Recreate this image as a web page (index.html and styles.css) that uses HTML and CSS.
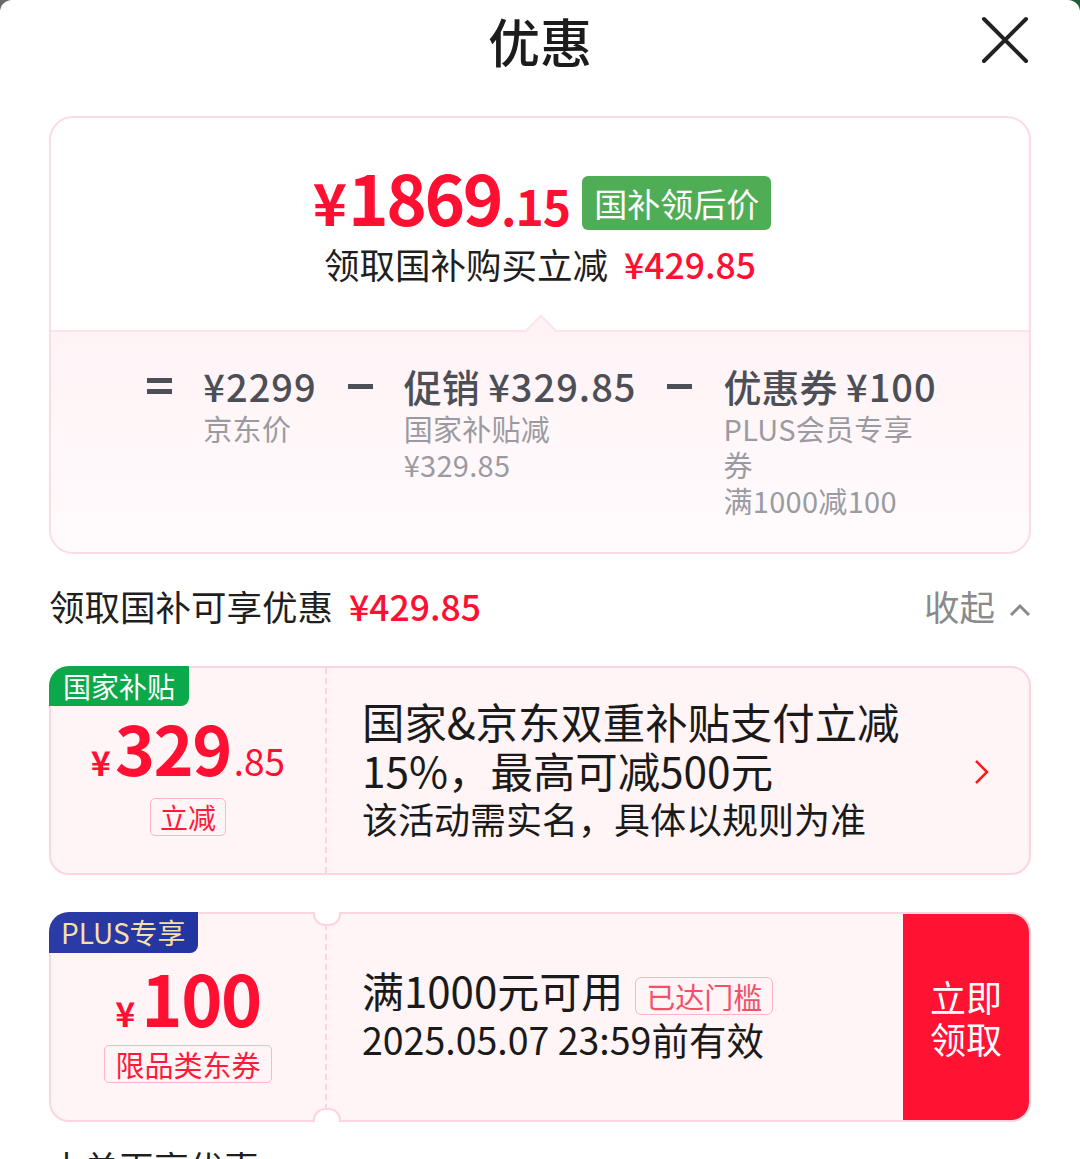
FILE: index.html
```html
<!DOCTYPE html>
<html lang="zh-CN">
<head>
<meta charset="utf-8">
<title>优惠</title>
<link rel="stylesheet" href="styles.css">
</head>
<body>
<div class="sheet">
  <header class="header">
    <span></span>
    <h1 class="title">优惠</h1>
    <button class="close" aria-label="关闭">
      <svg width="48" height="48" viewBox="0 0 48 48"><path d="M3 3 L45 45 M45 3 L3 45" stroke="#222" stroke-width="4" stroke-linecap="round" fill="none"/></svg>
    </button>
  </header>

  <section class="summary">
    <div class="summary-top">
      <div class="final-row">
        <div class="final-price"><span class="fp-yen">¥</span><span class="fp-int">1869</span><span class="fp-dec">.15</span></div>
        <span class="final-badge">国补领后价</span>
      </div>
      <div class="final-sub">领取国补购买立减<span class="red-num">¥429.85</span></div>
    </div>
    <div class="summary-bottom">
      <span class="op op-eq"><i></i><i></i></span>
      <div class="calc-col">
        <div class="calc-head"><span class="num">¥2299</span></div>
        <div class="calc-sub">京东价</div>
      </div>
      <span class="op op-minus"><i></i></span>
      <div class="calc-col">
        <div class="calc-head">促销 <span class="num">¥329.85</span></div>
        <div class="calc-sub">国家补贴减<br>¥329.85</div>
      </div>
      <span class="op op-minus"><i></i></span>
      <div class="calc-col col-narrow">
        <div class="calc-head">优惠券 <span class="num">¥100</span></div>
        <div class="calc-sub">PLUS会员专享<br>券<br>满1000减100</div>
      </div>
    </div>
  </section>

  <div class="section-row">
    <div class="section-title">领取国补可享优惠<span class="red-num">¥429.85</span></div>
    <div class="collapse">收起
      <svg width="22" height="14" viewBox="0 0 22 14"><path d="M2 12 L11 3 L20 12" stroke="#8a8a8a" stroke-width="3" fill="none"/></svg>
    </div>
  </div>

  <div class="coupon">
    <span class="corner corner-green">国家补贴</span>
    <div class="coupon-left">
      <div class="amount"><span class="a-yen">¥</span><span class="a-int">329</span><span class="a-dec">.85</span></div>
      <span class="tag">立减</span>
    </div>
    <div class="coupon-right">
      <div class="desc">
        <div class="desc-main">国家&amp;京东双重补贴支付立减<br>15%，最高可减500元</div>
        <div class="desc-note">该活动需实名，具体以规则为准</div>
      </div>
      <svg class="arrow" width="16" height="26" viewBox="0 0 16 26"><path d="M2 2 L13 13 L2 24" stroke="#ff1a1a" stroke-width="2.5" fill="none"/></svg>
    </div>
  </div>

  <div class="coupon coupon-plus">
    <span class="corner corner-plus">PLUS专享</span>
    <div class="coupon-left">
      <div class="amount"><span class="a-yen">¥</span><span class="a-int">100</span></div>
      <span class="tag">限品类东券</span>
    </div>
    <div class="coupon-right notched">
      <div class="desc">
        <div class="desc-line">满1000元可用<span class="tag tag-reached">已达门槛</span></div>
        <div class="desc-date">2025.05.07 23:59前有效</div>
      </div>
      <button class="get-btn">立即<br>领取</button>
    </div>
  </div>

  <div class="next-title">本单再享优惠</div>
</div>
</body>
</html>
```

FILE: styles.css
```css
* { box-sizing: border-box; }
html { background: linear-gradient(90deg, #6a6a6a, #1c5e36); }
body {
  margin: 0;
  font-family: "Noto Sans CJK SC", "Noto Sans", sans-serif;
  color: #1f1f1f;
}
.sheet {
  background: #fff;
  border-radius: 12px 12px 0 0;
  height: 1159px;
  overflow: hidden;
  padding: 0 49px;
}
.header {
  height: 86px;
  display: grid;
  grid-template-columns: 1fr auto 1fr;
  align-items: center;
}
.title {
  margin: -4px 0 0;
  font-size: 52px;
  font-weight: 500;
  line-height: 86px;
  color: #1c1c1c;
}
.close {
  justify-self: end;
  margin-right: 2px;
  margin-top: -6px;
  border: 0;
  background: none;
  padding: 0;
  width: 48px;
  height: 48px;
}
.close svg { display: block; }

.summary {
  margin-top: 30px;
  border: 2px solid #fcdbe3;
  border-radius: 24px;
  overflow: hidden;
}
.summary-top {
  height: 214px;
  display: flex;
  flex-direction: column;
  align-items: center;
  padding-top: 56px;
  border-bottom: 2px solid #fde3ea;
  position: relative;
}
.summary-top::after {
  content: "";
  position: absolute;
  left: 50%;
  bottom: -11px;
  width: 20px;
  height: 20px;
  margin-left: -10px;
  background: #fff3f6;
  border-top: 2px solid #fde3ea;
  border-left: 2px solid #fde3ea;
  transform: rotate(45deg);
}
.final-row {
  display: flex;
  align-items: center;
  gap: 12px;
  height: 60px;
  padding-left: 4px;
}
.final-price {
  color: #ff1032;
  font-weight: 700;
  line-height: 60px;
  white-space: nowrap;
  margin-top: 6px;
}
.fp-yen { font-size: 58px; margin-right: 1px; }
.fp-int { font-size: 69px; letter-spacing: -2.5px; }
.fp-dec { font-size: 48px; letter-spacing: -1px; }
.final-badge {
  background: #4fad55;
  color: #fff;
  font-size: 33px;
  line-height: 54px;
  height: 54px;
  padding: 0 12px;
  border-radius: 6px;
  margin-top: -2px;
}
.final-sub {
  margin-top: 8px;
  font-size: 35.5px;
  line-height: 44px;
  color: #1f1f1f;
}
.red-num {
  color: #ff1032;
  font-weight: 500;
  margin-left: 16px;
}

.summary-bottom {
  background: linear-gradient(#fff3f6, #fffbfc);
  display: flex;
  justify-content: center;
  align-items: flex-start;
  gap: 31px;
  padding: 30px 0 34px 4px;
}
.op {
  height: 48px;
  width: 25px;
  display: flex;
  flex-direction: column;
  justify-content: center;
  gap: 6px;
}
.op i {
  display: block;
  height: 5px;
  background: #4d4f57;
}
.calc-head {
  font-size: 38px;
  font-weight: 500;
  line-height: 48px;
  color: #4d4f57;
  white-space: nowrap;
}
.calc-head .num { letter-spacing: 1px; }
.calc-sub {
  font-size: 29px;
  line-height: 36px;
  color: #9a9ba2;
  letter-spacing: 0.3px;
}

.section-row {
  margin-top: 28px;
  display: flex;
  justify-content: space-between;
  align-items: center;
  line-height: 48px;
  font-size: 35.5px;
}
.section-title .red-num { margin-left: 16px; }
.collapse {
  color: #8a8a8a;
  display: flex;
  align-items: center;
  gap: 14px;
}
.collapse svg { margin-top: 8px; }

.coupon {
  margin-top: 36px;
  height: 209px;
  border: 2px solid #fdd5de;
  border-radius: 20px;
  background: #fff4f6;
  display: flex;
  position: relative;
}
.corner {
  position: absolute;
  top: -2px;
  left: -2px;
  height: 40px;
  line-height: 40px;
  padding: 0 14px;
  font-size: 28px;
  border-radius: 20px 0 8px 0;
  z-index: 2;
}
.corner-green { background: #0ba94a; color: #fff; }
.corner-plus {
  background: linear-gradient(90deg, #2b3ca6, #2234a0);
  color: #f6dfa8;
  height: 41px;
  line-height: 41px;
  padding: 0 12px;
}
.coupon-left {
  width: 274px;
  flex: none;
  display: flex;
  flex-direction: column;
  align-items: center;
  padding-top: 43px;
}
.amount {
  color: #ff1032;
  white-space: nowrap;
  line-height: 72px;
  height: 72px;
}
.a-yen { font-size: 34px; font-weight: 700; margin-right: 4px; }
.a-int { font-size: 68px; font-weight: 700; letter-spacing: -1.5px; }
.a-dec { font-size: 37px; margin-left: 3px; }
.tag {
  display: inline-block;
  border: 1.5px solid #ffb5c3;
  border-radius: 5px;
  color: #ff1a3a;
  font-size: 28px;
  line-height: 36px;
  padding: 0 9px;
  margin-top: 15px;
}
.coupon-right {
  flex: 1;
  border-left: 2px dashed #ffd3dc;
  display: flex;
  align-items: center;
  justify-content: space-between;
  padding: 0 39px 0 35px;
  position: relative;
}
.desc { margin-top: -4px; }
.desc-main {
  font-size: 42.4px;
  line-height: 49px;
  color: #1a1a1a;
}
.desc-note {
  font-size: 36px;
  line-height: 48px;
  color: #1a1a1a;
}
.arrow { display: block; margin-top: 2px; }

.coupon-plus { margin-top: 37px; height: 210px; }
.coupon-plus .coupon-left { padding-top: 47px; }
.coupon-plus .a-int { font-size: 70px; }
.coupon-plus .a-yen { margin-right: 6px; }
.coupon-plus .tag { margin-top: 12px; padding: 0 10px; font-size: 29px; line-height: 36px; }
.notched { padding-right: 0; }
.notched::before,
.notched::after {
  content: "";
  position: absolute;
  left: -14px;
  width: 24px;
  height: 12px;
  background: #fff;
  border: 2px solid #fdd5de;
}
.notched::before {
  top: -2px;
  border-top: 0;
  border-radius: 0 0 12px 12px;
}
.notched::after {
  bottom: -2px;
  border-bottom: 0;
  border-radius: 12px 12px 0 0;
}
.notched .desc { margin-top: -6px; }
.desc-line {
  font-size: 42px;
  line-height: 48px;
  color: #1a1a1a;
  display: flex;
  align-items: center;
}
.tag-reached {
  margin: -4px 0 0 12px;
  color: #f5506a;
  font-size: 30px;
  line-height: 37px;
  padding: 0 8px;
  border-radius: 6px;
}
.desc-date {
  font-size: 37.5px;
  line-height: 48px;
  color: #1a1a1a;
}
.get-btn {
  align-self: stretch;
  width: 126px;
  border: 0;
  margin: 0;
  background: #ff1232;
  color: #fff;
  font-family: inherit;
  font-size: 36px;
  line-height: 42px;
  border-radius: 0 18px 18px 0;
  padding: 0;
}

.next-title {
  margin-top: 21px;
  font-size: 35px;
  line-height: 48px;
  color: #1f1f1f;
}
```
